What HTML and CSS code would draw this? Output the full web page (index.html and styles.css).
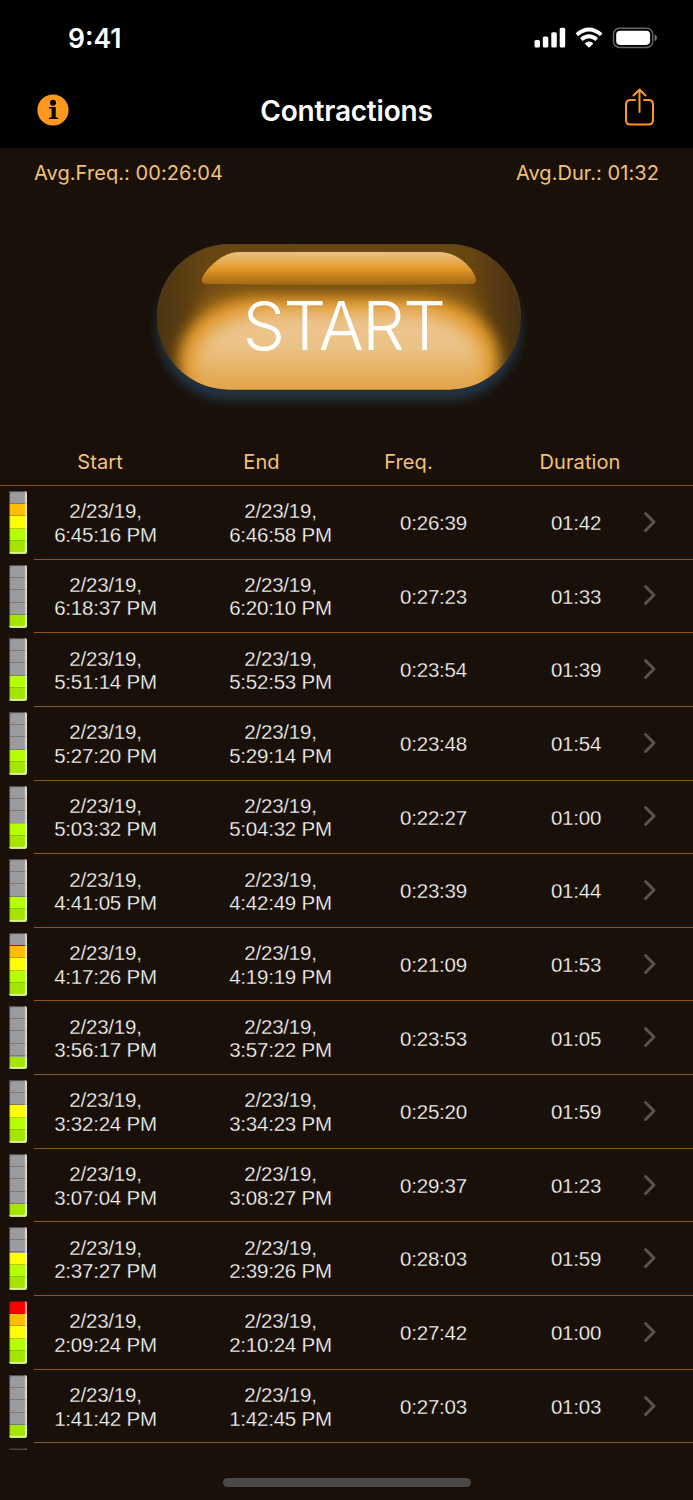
FILE: index.html
```
<!DOCTYPE html>
<html lang="en">
<head>
<meta charset="utf-8">
<title>Contractions</title>
<link rel="stylesheet" href="styles.css">
</head>
<body>
<svg class="defs" aria-hidden="true">
  <symbol id="chev" viewBox="0 0 14 22"><path d="M2.500 2.500 11 11 2.500 19.500" fill="none" stroke="#575351" stroke-width="3" stroke-linecap="round" stroke-linejoin="round"/></symbol>
</svg>
<header class="top">
  <div class="status">
    <span class="clock">9:41</span>
    <svg class="signals" width="124" height="24" viewBox="0 0 124 24">
      <g fill="#fff">
        <rect x="0.500" y="14" width="5.500" height="7.500" rx="1.500"/>
        <rect x="8.800" y="10.500" width="5.500" height="11" rx="1.500"/>
        <rect x="17.300" y="6.200" width="5.500" height="15.300" rx="1.500"/>
        <rect x="25.700" y="1.800" width="5.500" height="19.700" rx="1.500"/>
        <path d="M55 21.800 50.600 17.400Q55 13.800 59.400 17.400Z"/>
      </g>
      <g fill="none" stroke="#fff" stroke-width="3.900">
        <path d="M42.800 8.700Q55 -1.700 67.200 8.700"/>
        <path d="M47.300 13.400Q55 6.900 62.700 13.400"/>
      </g>
      <rect x="79.500" y="2.200" width="39.200" height="19.200" rx="6" fill="none" stroke="#656565" stroke-width="1.500"/>
      <rect x="82.200" y="4.700" width="33.900" height="14.200" rx="3.800" fill="#fff"/>
      <path d="M120.600 8.300Q123 9.500 123 11.800T120.600 15.300Z" fill="#777"/>
    </svg>
  </div>
  <div class="navbar">
    <svg class="info" width="32" height="32" viewBox="0 0 32 32">
      <circle cx="16" cy="16" r="15.600" fill="#ff981c"/>
      <circle cx="16" cy="8.700" r="3" fill="#000"/>
      <path d="M12 13H18.700V23.200L21.200 23.700V25H12V23.700L14.600 23.200V14.800L12 14.300Z" fill="#000"/>
    </svg>
    <h1>Contractions</h1>
    <svg class="share" width="32" height="40" viewBox="0 0 32 40" fill="none" stroke="#ff981c" stroke-width="2" stroke-linecap="round" stroke-linejoin="round">
      <path d="M11 13H6.500Q2 13 2 17.500V33Q2 37.500 6.500 37.500H24.500Q29 37.500 29 33V17.500Q29 13 24.500 13H20"/>
      <path d="M15.500 25V2.500M9.500 8.500 15.500 2.500 21.500 8.500"/>
    </svg>
  </div>
</header>
<main>
  <div class="averages"><span class="avg-freq">Avg.Freq.: 00:26:04</span><span class="avg-dur">Avg.Dur.: 01:32</span></div>
  <div class="hero">
    <button class="start">
      <svg class="gloss" width="404" height="190" viewBox="0 0 404 190">
        <defs>
          <clipPath id="pill"><rect x="20" y="14" width="364" height="145.500" rx="72"/></clipPath>
          <linearGradient id="base" x1="0" x2="1" y1="0" y2="0">
            <stop offset="0" stop-color="#4b3410"/><stop offset=".14" stop-color="#684612"/><stop offset=".5" stop-color="#6b4812"/><stop offset=".86" stop-color="#684612"/><stop offset="1" stop-color="#463011"/>
          </linearGradient>
          <linearGradient id="shine" x1="0" x2="0" y1="0" y2="1">
            <stop offset="0" stop-color="#ecc184"/><stop offset=".3" stop-color="#e6ab50"/><stop offset=".56" stop-color="#df9423"/><stop offset=".78" stop-color="#bd7c1c"/><stop offset="1" stop-color="#9e6817"/>
          </linearGradient>
          <linearGradient id="pool" x1="0" x2="0" y1="0" y2="1">
            <stop offset="0" stop-color="#ebc28a"/><stop offset=".28" stop-color="#ecc58d"/><stop offset=".45" stop-color="#e6b568"/><stop offset=".6" stop-color="#e2a64b"/><stop offset="1" stop-color="#df9d38"/>
          </linearGradient>
          <filter id="b5" x="-20%" y="-30%" width="140%" height="160%"><feGaussianBlur stdDeviation="5"/></filter>
          <filter id="b7" x="-20%" y="-30%" width="140%" height="160%"><feGaussianBlur stdDeviation="7"/></filter>
          <filter id="b8" x="-20%" y="-50%" width="140%" height="200%"><feGaussianBlur stdDeviation="8"/></filter>
          <filter id="b9" x="-20%" y="-30%" width="140%" height="160%"><feGaussianBlur stdDeviation="9"/></filter>
        </defs>
        <rect x="20" y="24" width="364" height="147" rx="73" fill="#20323f" filter="url(#b5)"/>
        <g clip-path="url(#pill)">
          <rect x="20" y="14" width="364" height="146" fill="url(#base)"/>
          <rect x="60" y="53" width="284" height="60" rx="30" fill="#a86f18" opacity=".4" filter="url(#b8)"/>
          <rect x="42" y="67" width="320" height="124" rx="80" ry="62" fill="#e09422" filter="url(#b7)"/>
          <rect x="54" y="80" width="296" height="124" rx="80" ry="60" fill="url(#pool)" filter="url(#b9)"/>
        </g>
        <path d="M103 22H301C320 22 333 35 338 46Q341 54 334 54Q202 56 71 54Q62 54 66 46C73 35 86 22 103 22Z" fill="url(#shine)"/>
        <path d="M20.500 86.500A72 72 0 0 1 92.500 14.500H311.500A72 72 0 0 1 383.500 86.500" fill="none" stroke="#554025" stroke-opacity=".65"/>
      </svg>
      <span class="start-label">START</span>
    </button>
  </div>
  <div class="thead"><span class="h-start">Start</span><span class="h-end">End</span><span class="h-freq">Freq.</span><span class="h-dur">Duration</span></div>
  <ul class="log">
    <li><i class="meter l4"></i><div class="row"><p>2/23/19,<br>6:45:16 PM</p><p>2/23/19,<br>6:46:58 PM</p><b>0:26:39</b><b>01:42</b><svg><use href="#chev"/></svg></div></li>
    <li><i class="meter l1"></i><div class="row"><p>2/23/19,<br>6:18:37 PM</p><p>2/23/19,<br>6:20:10 PM</p><b>0:27:23</b><b>01:33</b><svg><use href="#chev"/></svg></div></li>
    <li><i class="meter l2"></i><div class="row"><p>2/23/19,<br>5:51:14 PM</p><p>2/23/19,<br>5:52:53 PM</p><b>0:23:54</b><b>01:39</b><svg><use href="#chev"/></svg></div></li>
    <li><i class="meter l2"></i><div class="row"><p>2/23/19,<br>5:27:20 PM</p><p>2/23/19,<br>5:29:14 PM</p><b>0:23:48</b><b>01:54</b><svg><use href="#chev"/></svg></div></li>
    <li><i class="meter l2"></i><div class="row"><p>2/23/19,<br>5:03:32 PM</p><p>2/23/19,<br>5:04:32 PM</p><b>0:22:27</b><b>01:00</b><svg><use href="#chev"/></svg></div></li>
    <li><i class="meter l2"></i><div class="row"><p>2/23/19,<br>4:41:05 PM</p><p>2/23/19,<br>4:42:49 PM</p><b>0:23:39</b><b>01:44</b><svg><use href="#chev"/></svg></div></li>
    <li><i class="meter l4"></i><div class="row"><p>2/23/19,<br>4:17:26 PM</p><p>2/23/19,<br>4:19:19 PM</p><b>0:21:09</b><b>01:53</b><svg><use href="#chev"/></svg></div></li>
    <li><i class="meter l1"></i><div class="row"><p>2/23/19,<br>3:56:17 PM</p><p>2/23/19,<br>3:57:22 PM</p><b>0:23:53</b><b>01:05</b><svg><use href="#chev"/></svg></div></li>
    <li><i class="meter l3"></i><div class="row"><p>2/23/19,<br>3:32:24 PM</p><p>2/23/19,<br>3:34:23 PM</p><b>0:25:20</b><b>01:59</b><svg><use href="#chev"/></svg></div></li>
    <li><i class="meter l1"></i><div class="row"><p>2/23/19,<br>3:07:04 PM</p><p>2/23/19,<br>3:08:27 PM</p><b>0:29:37</b><b>01:23</b><svg><use href="#chev"/></svg></div></li>
    <li><i class="meter l3"></i><div class="row"><p>2/23/19,<br>2:37:27 PM</p><p>2/23/19,<br>2:39:26 PM</p><b>0:28:03</b><b>01:59</b><svg><use href="#chev"/></svg></div></li>
    <li><i class="meter l5"></i><div class="row"><p>2/23/19,<br>2:09:24 PM</p><p>2/23/19,<br>2:10:24 PM</p><b>0:27:42</b><b>01:00</b><svg><use href="#chev"/></svg></div></li>
    <li><i class="meter l1"></i><div class="row"><p>2/23/19,<br>1:41:42 PM</p><p>2/23/19,<br>1:42:45 PM</p><b>0:27:03</b><b>01:03</b><svg><use href="#chev"/></svg></div></li>
    <li class="cut"><i class="meter l1"></i></li>
  </ul>
</main>
<footer><div class="home"></div></footer>
</body>
</html>
```
FILE: styles.css
```
* { box-sizing: border-box; }
body {
  margin: 0;
  width: 693px;
  height: 1500px;
  overflow: hidden;
  display: flex;
  flex-direction: column;
  background: #191109;
  color: #fff;
  font-family: Inter, "Liberation Sans", sans-serif;
}
.defs { position: absolute; width: 0; height: 0; }
.top { height: 148px; background: #000; flex: none; }
.status {
  height: 76px;
  display: flex;
  justify-content: space-between;
  align-items: center;
  padding: 0 35px 0 68px;
}
.clock { font-size: 26.500px; font-weight: 600; letter-spacing: 0; line-height: 36px; }
.navbar {
  height: 72px;
  display: grid;
  grid-template-columns: 120px 1fr 120px;
  align-items: center;
  padding: 0 37px 4px 37px;
}
.share { justify-self: end; margin-top: -6px; }
h1 { margin: 2px 0 0; text-align: center; font-size: 28px; font-weight: 600; line-height: 36px; letter-spacing: -0.200px; }
.averages {
  height: 50px;
  display: flex;
  justify-content: space-between;
  align-items: center;
  padding: 0 34px;
  color: #f3c173;
  font-size: 20px;
  letter-spacing: 0.070px;
}
.hero { height: 240px; display: flex; justify-content: center; padding: 46px 15px 0 0; }
.start {
  position: relative;
  width: 364px;
  height: 145px;
  padding: 0;
  border: 0;
  background: none;
  color: #fff;
  font: 300 67px/1 Inter, "Liberation Sans", sans-serif;
}
.gloss { position: absolute; left: -20px; top: -14px; }
.start-label { position: relative; display: block; padding: 18px 0 0 9px; letter-spacing: -1.600px; white-space: nowrap; }
.thead {
  height: 48px;
  display: grid;
  grid-template-columns: 200px 123px 171px 172px;
  align-items: center;
  text-align: center;
  color: #f3c173;
  font-size: 20px;
  letter-spacing: 0.100px;
  border-bottom: 1px solid #834e11;
}
.log { list-style: none; margin: 0; padding: 0; }
.log li { height: 73.650px; display: grid; grid-template-columns: 34px 1fr; }
.row {
  display: grid;
  grid-template-columns: 143px 207px 99px 186px 24px;
  align-items: center;
  border-bottom: 1px solid #8d5615;
}
.row p, .row b {
  margin: 1px 0 0;
  text-align: center;
  font-family: "Liberation Sans", Arial, sans-serif;
  font-weight: 400;
  font-size: 20.500px;
  line-height: 23.500px;
  letter-spacing: -0.220px;
  white-space: nowrap;
  -webkit-text-stroke: 0.300px #191109;
}
.row svg { width: 14px; height: 22px; margin: -1px 0 0 -26px; }
.meter {
  display: block;
  position: relative;
  width: 18px;
  height: 63px;
  margin: 5px 0 0 9px;
  border-radius: 2px;
  overflow: hidden;
  background: linear-gradient(#f00 0 20%, #ffbf00 20% 40%, #ff0 40% 60%, #b5ff00 60% 80%, #a6e500 80%);
}
.meter::before {
  content: "";
  display: block;
  height: var(--empty);
  background: #9c9c9c;
}
.meter::after {
  content: "";
  position: absolute;
  inset: 0;
  border-radius: 2px;
  background: repeating-linear-gradient(transparent 0 11.600px, rgba(60, 50, 0, .3) 11.600px 12.600px);
  box-shadow: inset -2px -2px 1px rgba(255, 255, 255, .6), inset 1px 1px 1px rgba(20, 20, 20, .6);
}
.l1 { --empty: 80%; }
.l2 { --empty: 60%; }
.l3 { --empty: 40%; }
.l4 { --empty: 20%; }
.l5 { --empty: 0%; }
.log .cut { height: 7px; overflow: hidden; }
.cut .meter { opacity: .4; }
footer { flex: 1; display: flex; align-items: flex-end; justify-content: center; padding-bottom: 13px; }
.home { width: 248px; height: 9px; border-radius: 5px; background: #4a4846; }
```
